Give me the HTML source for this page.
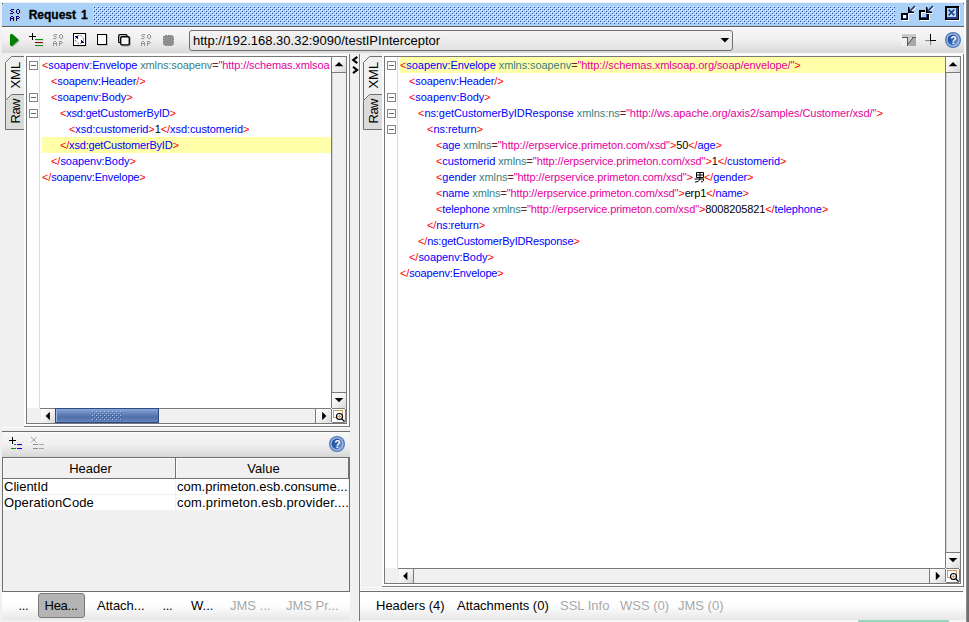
<!DOCTYPE html>
<html>
<head>
<meta charset="utf-8">
<title>Request 1</title>
<style>
*{box-sizing:border-box;margin:0;padding:0}
html,body{width:969px;height:622px;overflow:hidden;background:#f0f0f0;font-family:"Liberation Sans",sans-serif;}
body{position:relative}
.abs{position:absolute}
svg{position:absolute;overflow:visible}
/* title bar */
#title{left:2px;top:3px;width:962px;height:24px;background:#abd1f7;border-bottom:1px solid #5c5c5c;}
#title .txt{left:26.7px;top:4px;font-weight:bold;font-size:12px;word-spacing:1.6px;color:#000;-webkit-text-stroke:0.3px #000;white-space:nowrap;line-height:16px}
/* top toolbar */
#tb{left:2px;top:27px;width:962px;height:26px;background:linear-gradient(#ffffff 0,#f6f6f6 5%,#f0f0f0 50%,#d8d8d8 100%);}
#combo{left:189px;top:30px;width:544px;height:21px;border:1px solid #707070;border-radius:3px;background:linear-gradient(#f4f4f4,#ececec 50%,#e2e2e2);}
#combo .txt{left:3px;top:2px;font-size:13px;line-height:16px;white-space:nowrap;color:#000}
/* edges */
#redge{left:966px;top:0;width:3px;height:622px;background:linear-gradient(90deg,#9c9c9c 0,#707070 50%,#6c6c6c)}
#rwhite{left:964px;top:0;width:2px;height:622px;background:#fbfbfb}
#twhite{left:0;top:0;width:966px;height:2px;background:#fff}
/* editors */
.ed{background:#fff;border:1px solid #787878}
.code{font-size:11px;line-height:16px;color:#000;overflow:hidden}
.code div{height:16px;white-space:pre}
.code .nan{position:relative;display:inline-block;vertical-align:-2px}
.t{color:#f00}.e{color:#00f}.a{color:#3a8080}.q{color:#7a2020}.v{color:#e6009c}
.hl{background:#ffffaa}
.fold{width:9px;height:9px;border:1px solid #848484;background:#fff}
.fold:after{content:"";position:absolute;left:1px;top:3px;width:5px;height:1px;background:#6a6a6a}
.gut{background:#fff;border-right:1px solid #dcdcdc}
.sbv{background:#f0f0f0;border-left:1px solid #7c7c7c;}
.sbh{background:#f0f0f0;border-top:1px solid #7c7c7c;}
.btn{background:linear-gradient(135deg,#ffffff,#f2f2f2 50%,#d8d8d8);}
.ui{font-size:13px;line-height:16px;white-space:nowrap;color:#000}
.dis{color:#a9a9a9}
.vline{width:1px}.hline{height:1px}
</style>
</head>
<body>
<div id="twhite" class="abs"></div>
<div id="rwhite" class="abs"></div>
<div id="redge" class="abs"></div>
<div id="title" class="abs">
  <div class="abs txt">Request 1</div>
</div>
<div id="tb" class="abs"></div>
<div id="combo" class="abs"><div class="abs txt">http://192.168.30.32:9090/testIPInterceptor</div></div>
<!--ICONS-->
<svg class="abs" style="left:0;top:0" width="969" height="622" viewBox="0 0 969 622" shape-rendering="crispEdges">
<defs><pattern id="bump" x="93" y="6" width="4" height="4" patternUnits="userSpaceOnUse"><rect x="0" y="0" width="1" height="1" fill="#fff"/><rect x="1" y="1" width="1" height="1" fill="#2b4590"/><rect x="2" y="2" width="1" height="1" fill="#fff"/><rect x="3" y="3" width="1" height="1" fill="#2b4590"/></pattern>
<pattern id="bump2" x="92" y="411" width="4" height="4" patternUnits="userSpaceOnUse"><rect x="0" y="0" width="1" height="1" fill="#a9c4ea"/><rect x="1" y="1" width="1" height="1" fill="#3a5a9c"/><rect x="2" y="2" width="1" height="1" fill="#a9c4ea"/><rect x="3" y="3" width="1" height="1" fill="#3a5a9c"/></pattern></defs>
<rect x="93" y="6" width="802" height="18" fill="url(#bump)"/>
<rect x="12" y="10" width="3" height="1" fill="#c9c3b4"/><rect x="11" y="11" width="1" height="1" fill="#c9c3b4"/><rect x="12" y="12" width="2" height="1" fill="#c9c3b4"/><rect x="14" y="13" width="1" height="1" fill="#c9c3b4"/><rect x="11" y="14" width="3" height="1" fill="#c9c3b4"/><rect x="18" y="10" width="2" height="1" fill="#c9c3b4"/><rect x="17" y="11" width="1" height="1" fill="#c9c3b4"/><rect x="20" y="11" width="1" height="1" fill="#c9c3b4"/><rect x="17" y="12" width="1" height="1" fill="#c9c3b4"/><rect x="20" y="12" width="1" height="1" fill="#c9c3b4"/><rect x="17" y="13" width="1" height="1" fill="#c9c3b4"/><rect x="20" y="13" width="1" height="1" fill="#c9c3b4"/><rect x="18" y="14" width="2" height="1" fill="#c9c3b4"/><rect x="12" y="17" width="2" height="1" fill="#c9c3b4"/><rect x="11" y="18" width="1" height="1" fill="#c9c3b4"/><rect x="14" y="18" width="1" height="1" fill="#c9c3b4"/><rect x="11" y="19" width="4" height="1" fill="#c9c3b4"/><rect x="11" y="20" width="1" height="1" fill="#c9c3b4"/><rect x="14" y="20" width="1" height="1" fill="#c9c3b4"/><rect x="11" y="21" width="1" height="1" fill="#c9c3b4"/><rect x="14" y="21" width="1" height="1" fill="#c9c3b4"/><rect x="17" y="17" width="3" height="1" fill="#c9c3b4"/><rect x="17" y="18" width="1" height="1" fill="#c9c3b4"/><rect x="20" y="18" width="1" height="1" fill="#c9c3b4"/><rect x="17" y="19" width="3" height="1" fill="#c9c3b4"/><rect x="17" y="20" width="1" height="1" fill="#c9c3b4"/><rect x="17" y="21" width="1" height="1" fill="#c9c3b4"/><rect x="11" y="9" width="3" height="1" fill="#000088"/><rect x="10" y="10" width="1" height="1" fill="#000088"/><rect x="11" y="11" width="2" height="1" fill="#000088"/><rect x="13" y="12" width="1" height="1" fill="#000088"/><rect x="10" y="13" width="3" height="1" fill="#000088"/><rect x="17" y="9" width="2" height="1" fill="#000088"/><rect x="16" y="10" width="1" height="1" fill="#000088"/><rect x="19" y="10" width="1" height="1" fill="#000088"/><rect x="16" y="11" width="1" height="1" fill="#000088"/><rect x="19" y="11" width="1" height="1" fill="#000088"/><rect x="16" y="12" width="1" height="1" fill="#000088"/><rect x="19" y="12" width="1" height="1" fill="#000088"/><rect x="17" y="13" width="2" height="1" fill="#000088"/><rect x="11" y="16" width="2" height="1" fill="#000088"/><rect x="10" y="17" width="1" height="1" fill="#000088"/><rect x="13" y="17" width="1" height="1" fill="#000088"/><rect x="10" y="18" width="4" height="1" fill="#000088"/><rect x="10" y="19" width="1" height="1" fill="#000088"/><rect x="13" y="19" width="1" height="1" fill="#000088"/><rect x="10" y="20" width="1" height="1" fill="#000088"/><rect x="13" y="20" width="1" height="1" fill="#000088"/><rect x="16" y="16" width="3" height="1" fill="#000088"/><rect x="16" y="17" width="1" height="1" fill="#000088"/><rect x="19" y="17" width="1" height="1" fill="#000088"/><rect x="16" y="18" width="3" height="1" fill="#000088"/><rect x="16" y="19" width="1" height="1" fill="#000088"/><rect x="16" y="20" width="1" height="1" fill="#000088"/>
<rect x="55" y="35" width="3" height="1" fill="#e2e2e2"/><rect x="54" y="36" width="1" height="1" fill="#e2e2e2"/><rect x="55" y="37" width="2" height="1" fill="#e2e2e2"/><rect x="57" y="38" width="1" height="1" fill="#e2e2e2"/><rect x="54" y="39" width="3" height="1" fill="#e2e2e2"/><rect x="61" y="35" width="2" height="1" fill="#e2e2e2"/><rect x="60" y="36" width="1" height="1" fill="#e2e2e2"/><rect x="63" y="36" width="1" height="1" fill="#e2e2e2"/><rect x="60" y="37" width="1" height="1" fill="#e2e2e2"/><rect x="63" y="37" width="1" height="1" fill="#e2e2e2"/><rect x="60" y="38" width="1" height="1" fill="#e2e2e2"/><rect x="63" y="38" width="1" height="1" fill="#e2e2e2"/><rect x="61" y="39" width="2" height="1" fill="#e2e2e2"/><rect x="55" y="42" width="2" height="1" fill="#e2e2e2"/><rect x="54" y="43" width="1" height="1" fill="#e2e2e2"/><rect x="57" y="43" width="1" height="1" fill="#e2e2e2"/><rect x="54" y="44" width="4" height="1" fill="#e2e2e2"/><rect x="54" y="45" width="1" height="1" fill="#e2e2e2"/><rect x="57" y="45" width="1" height="1" fill="#e2e2e2"/><rect x="54" y="46" width="1" height="1" fill="#e2e2e2"/><rect x="57" y="46" width="1" height="1" fill="#e2e2e2"/><rect x="60" y="42" width="3" height="1" fill="#e2e2e2"/><rect x="60" y="43" width="1" height="1" fill="#e2e2e2"/><rect x="63" y="43" width="1" height="1" fill="#e2e2e2"/><rect x="60" y="44" width="3" height="1" fill="#e2e2e2"/><rect x="60" y="45" width="1" height="1" fill="#e2e2e2"/><rect x="60" y="46" width="1" height="1" fill="#e2e2e2"/><rect x="54" y="34" width="3" height="1" fill="#9a9a9a"/><rect x="53" y="35" width="1" height="1" fill="#9a9a9a"/><rect x="54" y="36" width="2" height="1" fill="#9a9a9a"/><rect x="56" y="37" width="1" height="1" fill="#9a9a9a"/><rect x="53" y="38" width="3" height="1" fill="#9a9a9a"/><rect x="60" y="34" width="2" height="1" fill="#9a9a9a"/><rect x="59" y="35" width="1" height="1" fill="#9a9a9a"/><rect x="62" y="35" width="1" height="1" fill="#9a9a9a"/><rect x="59" y="36" width="1" height="1" fill="#9a9a9a"/><rect x="62" y="36" width="1" height="1" fill="#9a9a9a"/><rect x="59" y="37" width="1" height="1" fill="#9a9a9a"/><rect x="62" y="37" width="1" height="1" fill="#9a9a9a"/><rect x="60" y="38" width="2" height="1" fill="#9a9a9a"/><rect x="54" y="41" width="2" height="1" fill="#9a9a9a"/><rect x="53" y="42" width="1" height="1" fill="#9a9a9a"/><rect x="56" y="42" width="1" height="1" fill="#9a9a9a"/><rect x="53" y="43" width="4" height="1" fill="#9a9a9a"/><rect x="53" y="44" width="1" height="1" fill="#9a9a9a"/><rect x="56" y="44" width="1" height="1" fill="#9a9a9a"/><rect x="53" y="45" width="1" height="1" fill="#9a9a9a"/><rect x="56" y="45" width="1" height="1" fill="#9a9a9a"/><rect x="59" y="41" width="3" height="1" fill="#9a9a9a"/><rect x="59" y="42" width="1" height="1" fill="#9a9a9a"/><rect x="62" y="42" width="1" height="1" fill="#9a9a9a"/><rect x="59" y="43" width="3" height="1" fill="#9a9a9a"/><rect x="59" y="44" width="1" height="1" fill="#9a9a9a"/><rect x="59" y="45" width="1" height="1" fill="#9a9a9a"/>
<rect x="143" y="35" width="3" height="1" fill="#e2e2e2"/><rect x="142" y="36" width="1" height="1" fill="#e2e2e2"/><rect x="143" y="37" width="2" height="1" fill="#e2e2e2"/><rect x="145" y="38" width="1" height="1" fill="#e2e2e2"/><rect x="142" y="39" width="3" height="1" fill="#e2e2e2"/><rect x="149" y="35" width="2" height="1" fill="#e2e2e2"/><rect x="148" y="36" width="1" height="1" fill="#e2e2e2"/><rect x="151" y="36" width="1" height="1" fill="#e2e2e2"/><rect x="148" y="37" width="1" height="1" fill="#e2e2e2"/><rect x="151" y="37" width="1" height="1" fill="#e2e2e2"/><rect x="148" y="38" width="1" height="1" fill="#e2e2e2"/><rect x="151" y="38" width="1" height="1" fill="#e2e2e2"/><rect x="149" y="39" width="2" height="1" fill="#e2e2e2"/><rect x="143" y="42" width="2" height="1" fill="#e2e2e2"/><rect x="142" y="43" width="1" height="1" fill="#e2e2e2"/><rect x="145" y="43" width="1" height="1" fill="#e2e2e2"/><rect x="142" y="44" width="4" height="1" fill="#e2e2e2"/><rect x="142" y="45" width="1" height="1" fill="#e2e2e2"/><rect x="145" y="45" width="1" height="1" fill="#e2e2e2"/><rect x="142" y="46" width="1" height="1" fill="#e2e2e2"/><rect x="145" y="46" width="1" height="1" fill="#e2e2e2"/><rect x="148" y="42" width="3" height="1" fill="#e2e2e2"/><rect x="148" y="43" width="1" height="1" fill="#e2e2e2"/><rect x="151" y="43" width="1" height="1" fill="#e2e2e2"/><rect x="148" y="44" width="3" height="1" fill="#e2e2e2"/><rect x="148" y="45" width="1" height="1" fill="#e2e2e2"/><rect x="148" y="46" width="1" height="1" fill="#e2e2e2"/><rect x="142" y="34" width="3" height="1" fill="#9a9a9a"/><rect x="141" y="35" width="1" height="1" fill="#9a9a9a"/><rect x="142" y="36" width="2" height="1" fill="#9a9a9a"/><rect x="144" y="37" width="1" height="1" fill="#9a9a9a"/><rect x="141" y="38" width="3" height="1" fill="#9a9a9a"/><rect x="148" y="34" width="2" height="1" fill="#9a9a9a"/><rect x="147" y="35" width="1" height="1" fill="#9a9a9a"/><rect x="150" y="35" width="1" height="1" fill="#9a9a9a"/><rect x="147" y="36" width="1" height="1" fill="#9a9a9a"/><rect x="150" y="36" width="1" height="1" fill="#9a9a9a"/><rect x="147" y="37" width="1" height="1" fill="#9a9a9a"/><rect x="150" y="37" width="1" height="1" fill="#9a9a9a"/><rect x="148" y="38" width="2" height="1" fill="#9a9a9a"/><rect x="142" y="41" width="2" height="1" fill="#9a9a9a"/><rect x="141" y="42" width="1" height="1" fill="#9a9a9a"/><rect x="144" y="42" width="1" height="1" fill="#9a9a9a"/><rect x="141" y="43" width="4" height="1" fill="#9a9a9a"/><rect x="141" y="44" width="1" height="1" fill="#9a9a9a"/><rect x="144" y="44" width="1" height="1" fill="#9a9a9a"/><rect x="141" y="45" width="1" height="1" fill="#9a9a9a"/><rect x="144" y="45" width="1" height="1" fill="#9a9a9a"/><rect x="147" y="41" width="3" height="1" fill="#9a9a9a"/><rect x="147" y="42" width="1" height="1" fill="#9a9a9a"/><rect x="150" y="42" width="1" height="1" fill="#9a9a9a"/><rect x="147" y="43" width="3" height="1" fill="#9a9a9a"/><rect x="147" y="44" width="1" height="1" fill="#9a9a9a"/><rect x="147" y="45" width="1" height="1" fill="#9a9a9a"/>
<rect x="2" y="3" width="1" height="1" fill="#555"/><rect x="963" y="3" width="1" height="1" fill="#555"/>
</svg>
<svg class="abs" style="left:0;top:0" width="969" height="622" viewBox="0 0 969 622">
<g shape-rendering="crispEdges"><rect x="902" y="14" width="7" height="7" fill="#fff"/><rect x="901" y="13" width="7" height="7" fill="#000"/><rect x="903" y="15" width="4" height="4" fill="#27428e"/><rect x="903" y="15" width="3" height="3" fill="#fff"/><rect x="920" y="12" width="5" height="1" fill="#fff"/><rect x="921" y="12" width="1" height="6" fill="#fff"/><rect x="920" y="20" width="10" height="1" fill="#fff"/><rect x="929" y="15" width="1" height="6" fill="#fff"/><rect x="919" y="10" width="6" height="2" fill="#000"/><rect x="919" y="10" width="2" height="10" fill="#000"/><rect x="919" y="18" width="10" height="2" fill="#000"/><rect x="927" y="14" width="2" height="6" fill="#000"/><rect x="921" y="17" width="6" height="1" fill="#27428e"/><rect x="926" y="14" width="1" height="4" fill="#27428e"/><rect x="921" y="12" width="1" height="5" fill="#fff"/><rect x="946" y="7" width="14" height="14" fill="#fff"/><rect x="945" y="6" width="14" height="14" fill="#000"/><rect x="947" y="8" width="11" height="11" fill="#27428e"/><rect x="947" y="8" width="9" height="9" fill="#abd1f7"/></g>
<path d="M949.6 10.6 L955.4 16.4 M955.4 10.6 L949.6 16.4" stroke="#fff" stroke-width="1.2" fill="none" opacity=".8"/>
<path d="M948.7 9.7 L954.3 15.3 M954.3 9.7 L948.7 15.3" stroke="#27428e" stroke-width="1.7" fill="none"/>
<path d="M909 8 V14 H915 Z" fill="#fff"/><path d="M911.8 10.8 L916 6.6" stroke="#fff" stroke-width="1.6"/><path d="M908 7 V13 H914 Z" fill="#27428e"/><rect x="908" y="7" width="1.4" height="6" fill="#000"/><rect x="908" y="11.6" width="6" height="1.4" fill="#000"/><path d="M911 10 L915 6" stroke="#1a2f6e" stroke-width="1.7"/>
<path d="M927 8 V14 H933 Z" fill="#fff"/><path d="M929.8 10.8 L934 6.6" stroke="#fff" stroke-width="1.6"/><path d="M926 7 V13 H932 Z" fill="#27428e"/><rect x="926" y="7" width="1.4" height="6" fill="#000"/><rect x="926" y="11.6" width="6" height="1.4" fill="#000"/><path d="M929 10 L933 6" stroke="#1a2f6e" stroke-width="1.7"/>
<path d="M11.5 34.5 L11 34 L10 35 V45 L11 46.3 L12.3 46.3 L18.6 40.6 V39.6 L12.5 34 Z" fill="#b8b8b8" transform="translate(0.8,0.8)"/>
<path d="M11 34 L10 35 V45 L11 46 H12.3 L18.5 40.5 V39.5 L12.3 34 Z" fill="#008000"/>
<g shape-rendering="crispEdges"><rect x="29" y="36" width="7" height="1" fill="#000"/><rect x="32" y="33" width="1" height="7" fill="#000"/><rect x="35" y="39" width="8" height="1" fill="#109010"/><rect x="35" y="42" width="8" height="1" fill="#8a0000"/><rect x="35" y="45" width="8" height="1" fill="#109010"/><rect x="36" y="40" width="8" height="1" fill="#d8d8d8"/><rect x="36" y="43" width="8" height="1" fill="#d8d8d8"/><rect x="36" y="46" width="8" height="1" fill="#d8d8d8"/></g>
<g shape-rendering="crispEdges"><rect x="74" y="34" width="13" height="13" fill="#d0d0d0"/><rect x="73" y="33" width="13" height="13" fill="#000"/><rect x="74" y="34" width="11" height="11" fill="#fff"/></g>
<circle cx="79.5" cy="39.5" r="4.1" fill="none" stroke="#808080" stroke-width="1" stroke-dasharray="2.2 1.1"/>
<g shape-rendering="crispEdges" fill="#000090"><rect x="75" y="36" width="3" height="1"/><rect x="77" y="36" width="1" height="3"/><rect x="76" y="37" width="1" height="1"/><rect x="81" y="40" width="1" height="3"/><rect x="81" y="42" width="3" height="1"/><rect x="82" y="41" width="1" height="1"/></g>
<g shape-rendering="crispEdges"><rect x="98" y="35" width="10" height="11" fill="#c4c4c4"/><rect x="97.5" y="34.5" width="9" height="10" fill="#fafafa" stroke="#000" stroke-width="1"/><rect x="98" y="44" width="9" height="1" fill="#000"/><rect x="106" y="35" width="1" height="10" fill="#000"/></g>
<rect x="118.7" y="34.7" width="8.4" height="8" rx="1.3" fill="#f4f4f4" stroke="#000" stroke-width="1.3"/>
<rect x="121.2" y="37.2" width="9" height="8.6" rx="1.3" fill="#bbb" stroke="#aaa" stroke-width="1.3"/>
<rect x="120.7" y="36.7" width="8.6" height="8.2" rx="1.3" fill="#f6f6f6" stroke="#000" stroke-width="1.4"/>
<rect x="163.5" y="35.5" width="10" height="10" rx="2" fill="#8e8e8e" stroke="#7a7a7a" stroke-width="1" stroke-dasharray="1.5 1"/>
<path d="M720.6 38 h8.6 l-4.3 4.6z" fill="#000"/>
<g shape-rendering="crispEdges"><rect x="902" y="33" width="14" height="13" fill="#fafafa"/><rect x="902" y="34" width="14" height="4" fill="#cacaca"/><rect x="902" y="38" width="5" height="8" fill="#f2f2f2"/></g>
<path d="M908 38 H913.5 L908 44.5Z" fill="#cacaca"/><path d="M913.5 38 H916 V46 H908 V44.5Z" fill="#a9a9a9"/>
<g shape-rendering="crispEdges"><rect x="902" y="37" width="6" height="1" fill="#5a5a5a"/><rect x="912" y="37" width="4" height="1" fill="#5a5a5a"/><rect x="907" y="37" width="1" height="9" fill="#5a5a5a"/></g>
<path d="M908 44.2 L913.2 37.6" stroke="#4a4a4a" stroke-width="1" fill="none"/>
<g shape-rendering="crispEdges"><rect x="925" y="40" width="5" height="1" fill="#8c8c8c"/><rect x="930" y="40" width="6" height="1" fill="#000"/><rect x="930" y="34" width="1" height="7" fill="#000"/><rect x="930" y="41" width="1" height="4" fill="#8c8c8c"/><rect x="926" y="41" width="4" height="1" fill="#dcdcdc"/><rect x="931" y="41" width="1" height="4" fill="#dcdcdc"/></g>
<defs><linearGradient id="hg953" x1="0" y1="0.2" x2="1" y2="0.8"><stop offset="0" stop-color="#1a4790"/><stop offset="0.55" stop-color="#3865ae"/><stop offset="1" stop-color="#86a8dc"/></linearGradient></defs><circle cx="953" cy="40" r="8" fill="#4d78bc"/><circle cx="953" cy="40" r="6.7" fill="#a4bde4"/><circle cx="953" cy="40" r="5.4" fill="url(#hg953)"/><text x="953.4" y="43.7" font-family="Liberation Sans,sans-serif" font-weight="bold" font-size="10.5" fill="#fff" text-anchor="middle">?</text>
</svg>
<!--/ICONS-->

<!-- pane content borders (white ring) -->
<div class="abs" style="left:24px;top:54px;width:325px;height:372px;background:#fcfcfc"></div>
<div class="abs" style="left:382px;top:53px;width:581px;height:533px;background:#fcfcfc"></div>
<!-- LEFT EDITOR -->
<div id="led" class="abs ed" style="left:26px;top:56px;width:321px;height:368px"></div>
<div id="lcode" class="abs code" style="left:42px;top:57px;width:289px;height:351px">
<!--LC-->
<div style="padding-left:0px;letter-spacing:-0.104px;width:288px;overflow:hidden;"><span class="t">&lt;</span><span class="e">soapenv:Envelope</span> <span class="a">xmlns:soapenv</span><span class="q">=</span><span class="v">"http://schemas.xmlsoap.org/soap/envelope/"</span><span class="t">&gt;</span></div>
<div style="padding-left:9px;letter-spacing:-0.121px;"><span class="t">&lt;</span><span class="e">soapenv:Header</span><span class="t">/&gt;</span></div>
<div style="padding-left:9px;letter-spacing:-0.071px;"><span class="t">&lt;</span><span class="e">soapenv:Body</span><span class="t">&gt;</span></div>
<div style="padding-left:18px;letter-spacing:-0.193px;"><span class="t">&lt;</span><span class="e">xsd:getCustomerByID</span><span class="t">&gt;</span></div>
<div style="padding-left:27px;letter-spacing:-0.073px;"><span class="t">&lt;</span><span class="e">xsd:customerid</span><span class="t">&gt;</span>1<span class="t">&lt;/</span><span class="e">xsd:customerid</span><span class="t">&gt;</span></div>
<div class="hl" style="padding-left:18px;letter-spacing:-0.191px;"><span class="t">&lt;/</span><span class="e">xsd:getCustomerByID</span><span class="t">&gt;</span></div>
<div style="padding-left:9px;letter-spacing:-0.056px;"><span class="t">&lt;/</span><span class="e">soapenv:Body</span><span class="t">&gt;</span></div>
<div style="padding-left:0px;letter-spacing:-0.149px;"><span class="t">&lt;/</span><span class="e">soapenv:Envelope</span><span class="t">&gt;</span></div>
<!--/LC-->
</div>

<!-- RIGHT EDITOR -->
<div id="red" class="abs ed" style="left:384px;top:56px;width:577px;height:528px"></div>
<div id="rcode" class="abs code" style="left:400px;top:57px;width:545px;height:511px">
<!--RC-->
<div class="hl" style="padding-left:0px;letter-spacing:-0.073px;"><span class="t">&lt;</span><span class="e">soapenv:Envelope</span> <span class="a">xmlns:soapenv</span><span class="q">=</span><span class="v">"http://schemas.xmlsoap.org/soap/envelope/"</span><span class="t">&gt;</span></div>
<div style="padding-left:9px;letter-spacing:-0.121px;"><span class="t">&lt;</span><span class="e">soapenv:Header</span><span class="t">/&gt;</span></div>
<div style="padding-left:9px;letter-spacing:-0.071px;"><span class="t">&lt;</span><span class="e">soapenv:Body</span><span class="t">&gt;</span></div>
<div style="padding-left:18px;letter-spacing:-0.064px;"><span class="t">&lt;</span><span class="e">ns:getCustomerByIDResponse</span> <span class="a">xmlns:ns</span><span class="q">=</span><span class="v">"http://ws.apache.org/axis2/samples/Customer/xsd/"</span><span class="t">&gt;</span></div>
<div style="padding-left:27px;letter-spacing:-0.036px;"><span class="t">&lt;</span><span class="e">ns:return</span><span class="t">&gt;</span></div>
<div style="padding-left:36px;letter-spacing:-0.108px;"><span class="t">&lt;</span><span class="e">age</span> <span class="a">xmlns</span><span class="q">=</span><span class="v">"http://erpservice.primeton.com/xsd"</span><span class="t">&gt;</span>50<span class="t">&lt;/</span><span class="e">age</span><span class="t">&gt;</span></div>
<div style="padding-left:36px;letter-spacing:-0.092px;"><span class="t">&lt;</span><span class="e">customerid</span> <span class="a">xmlns</span><span class="q">=</span><span class="v">"http://erpservice.primeton.com/xsd"</span><span class="t">&gt;</span>1<span class="t">&lt;/</span><span class="e">customerid</span><span class="t">&gt;</span></div>
<div style="padding-left:36px;letter-spacing:-0.085px;"><span class="t">&lt;</span><span class="e">gender</span> <span class="a">xmlns</span><span class="q">=</span><span class="v">"http://erpservice.primeton.com/xsd"</span><span class="t">&gt;</span><svg class="nan" width="11" height="11" viewBox="0 0 11 11"><path d="M3.5 0.5H10.5V5.5H3.5ZM3.5 3H10.5M7 0.5V5.5M1.5 7H11M7 5.5V7C6.7 8.6 5.2 9.7 2 10.1M10.5 7C10.5 9 10.3 9.9 8 9.9" fill="none" stroke="#000" stroke-width="1"/></svg><span class="t">&lt;/</span><span class="e">gender</span><span class="t">&gt;</span></div>
<div style="padding-left:36px;letter-spacing:-0.121px;"><span class="t">&lt;</span><span class="e">name</span> <span class="a">xmlns</span><span class="q">=</span><span class="v">"http://erpservice.primeton.com/xsd"</span><span class="t">&gt;</span>erp1<span class="t">&lt;/</span><span class="e">name</span><span class="t">&gt;</span></div>
<div style="padding-left:36px;letter-spacing:-0.113px;"><span class="t">&lt;</span><span class="e">telephone</span> <span class="a">xmlns</span><span class="q">=</span><span class="v">"http://erpservice.primeton.com/xsd"</span><span class="t">&gt;</span>8008205821<span class="t">&lt;/</span><span class="e">telephone</span><span class="t">&gt;</span></div>
<div style="padding-left:27px;letter-spacing:-0.112px;"><span class="t">&lt;/</span><span class="e">ns:return</span><span class="t">&gt;</span></div>
<div style="padding-left:18px;letter-spacing:-0.184px;"><span class="t">&lt;/</span><span class="e">ns:getCustomerByIDResponse</span><span class="t">&gt;</span></div>
<div style="padding-left:9px;letter-spacing:-0.056px;"><span class="t">&lt;/</span><span class="e">soapenv:Body</span><span class="t">&gt;</span></div>
<div style="padding-left:0px;letter-spacing:-0.149px;"><span class="t">&lt;/</span><span class="e">soapenv:Envelope</span><span class="t">&gt;</span></div>
<!--/RC-->
</div>

<!-- fold markers & gutters -->
<div class="abs gut" style="left:27px;top:57px;width:13px;height:351px"></div>
<div class="abs" style="left:27px;top:408px;width:13px;height:15px;background:#f0f0f0"></div>
<div class="abs" style="left:331px;top:57px;width:15px;height:351px;background:#f0f0f0;border-left:1px solid #7a7a7a;box-shadow:inset 1px 0 0 #d2d2d2"></div>
<div class="abs btn" style="left:332px;top:57px;width:14px;height:16px;border-bottom:1px solid #7a7a7a"></div>
<div class="abs btn" style="left:332px;top:392px;width:14px;height:16px;border-top:1px solid #7a7a7a"></div>
<div class="abs" style="left:40px;top:408px;width:291px;height:15px;background:#f0f0f0;border-top:1px solid #7a7a7a"></div>
<div class="abs btn" style="left:41px;top:409px;width:15px;height:14px;border-right:1px solid #7a7a7a"></div>
<div class="abs btn" style="left:315px;top:409px;width:16px;height:14px;border-left:1px solid #7a7a7a"></div>
<div class="abs" style="left:55px;top:408px;width:104px;height:15px;border:1px solid #2c4a88;background:linear-gradient(#8ba5d3,#6180b9 40%,#5070aa 62%,#6484be);box-shadow:inset 1px 0 0 #9fb8e2"></div>
<div class="abs" style="left:331px;top:408px;width:15px;height:15px;background:#7c7c7c"></div>
<div class="abs" style="left:332px;top:409px;width:13px;height:13px;background:linear-gradient(135deg,#fff 55%,#ececec)"></div>
<div class="abs" style="left:331px;top:408px;width:1px;height:1px;background:#fff"></div>
<div class="abs" style="left:345px;top:408px;width:1px;height:1px;background:#fff"></div>
<div class="abs" style="left:331px;top:422px;width:1px;height:1px;background:#fff"></div>
<div class="abs" style="left:345px;top:422px;width:1px;height:1px;background:#fff"></div>
<div class="abs fold" style="left:29px;top:61px"></div>
<div class="abs fold" style="left:29px;top:93px"></div>
<div class="abs fold" style="left:29px;top:109px"></div>
<div class="abs gut" style="left:385px;top:57px;width:13px;height:511px"></div>
<div class="abs" style="left:385px;top:568px;width:13px;height:15px;background:#f0f0f0"></div>
<div class="abs" style="left:945px;top:57px;width:15px;height:511px;background:#f0f0f0;border-left:1px solid #7a7a7a;box-shadow:inset 1px 0 0 #d2d2d2"></div>
<div class="abs btn" style="left:946px;top:57px;width:14px;height:16px;border-bottom:1px solid #7a7a7a"></div>
<div class="abs btn" style="left:946px;top:552px;width:14px;height:16px;border-top:1px solid #7a7a7a"></div>
<div class="abs" style="left:398px;top:568px;width:547px;height:15px;background:#f0f0f0;border-top:1px solid #7a7a7a"></div>
<div class="abs btn" style="left:399px;top:569px;width:15px;height:14px;border-right:1px solid #7a7a7a"></div>
<div class="abs btn" style="left:929px;top:569px;width:16px;height:14px;border-left:1px solid #7a7a7a"></div>
<div class="abs" style="left:945px;top:568px;width:15px;height:15px;background:#7c7c7c"></div>
<div class="abs" style="left:946px;top:569px;width:13px;height:13px;background:linear-gradient(135deg,#fff 55%,#ececec)"></div>
<div class="abs" style="left:945px;top:568px;width:1px;height:1px;background:#fff"></div>
<div class="abs" style="left:959px;top:568px;width:1px;height:1px;background:#fff"></div>
<div class="abs" style="left:945px;top:582px;width:1px;height:1px;background:#fff"></div>
<div class="abs" style="left:959px;top:582px;width:1px;height:1px;background:#fff"></div>
<div class="abs fold" style="left:387px;top:61px"></div>
<div class="abs fold" style="left:387px;top:93px"></div>
<div class="abs fold" style="left:387px;top:109px"></div>
<div class="abs fold" style="left:387px;top:125px"></div>

<!-- divider lines -->
<div class="abs vline" style="left:349px;top:54px;height:373px;background:#7a7a7a"></div>
<div class="abs vline" style="left:359px;top:54px;height:567px;background:#7a7a7a"></div>
<div class="abs vline" style="left:360px;top:54px;height:537px;background:#fafafa"></div>
<div class="abs vline" style="left:963px;top:54px;height:533px;background:#7a7a7a"></div>
<div class="abs hline" style="left:382px;top:586px;width:582px;background:#7a7a7a"></div>
<div class="abs hline" style="left:360px;top:587px;width:604px;background:#fcfcfc"></div>
<div class="abs hline" style="left:360px;top:590px;width:604px;background:#fcfcfc"></div>

<!-- left split lines -->
<div class="abs hline" style="left:24px;top:426px;width:326px;background:#7a7a7a"></div>
<div class="abs hline" style="left:2px;top:427px;width:349px;background:#fcfcfc"></div>
<div class="abs hline" style="left:2px;top:431px;width:348px;background:#6e6e6e"></div>
<!-- bottom-left toolbar -->
<div class="abs" style="left:2px;top:432px;width:348px;height:25px;background:linear-gradient(#ffffff 0,#f6f6f6 5%,#f0f0f0 50%,#d8d8d8 100%)"></div>
<!-- table -->
<div class="abs" style="left:2px;top:457px;width:348px;height:135px;border:1px solid #6e6e6e;background:#f0f0f0"></div>
<div class="abs" style="left:3px;top:458px;width:173px;height:21px;border-right:1px solid #747474;border-bottom:1px solid #747474;background:#f0f0f0;box-shadow:inset 1px 1px #fbfbfb"></div>
<div class="abs" style="left:176px;top:458px;width:173px;height:21px;border-right:1px solid #747474;border-bottom:1px solid #747474;background:#f0f0f0;box-shadow:inset 1px 1px #fbfbfb"></div>
<div class="abs" style="left:3px;top:479px;width:345px;height:32px;background:#fff"></div>
<div class="abs hline" style="left:3px;top:494px;width:345px;background:#f0f0f0"></div>
<div class="abs hline" style="left:3px;top:510px;width:345px;background:#f0f0f0"></div>
<div class="abs vline" style="left:175px;top:479px;height:32px;background:#f0f0f0"></div>
<div class="abs ui" id="th1" style="left:4px;top:461px;width:173px;text-align:center">Header</div>
<div class="abs ui" id="th2" style="left:177px;top:461px;width:173px;text-align:center">Value</div>
<div class="abs ui" id="c11" style="left:4px;top:479px">ClientId</div>
<div class="abs ui" id="c21" style="left:4px;top:495px;letter-spacing:0.14px">OperationCode</div>
<div class="abs ui" id="c12" style="left:177px;top:479px">com.primeton.esb.consume...</div>
<div class="abs ui" id="c22" style="left:177px;top:495px;letter-spacing:0.15px">com.primeton.esb.provider....</div>
<!-- bottom-left tabs -->
<div class="abs" style="left:2px;top:592px;width:348px;height:28px;background:linear-gradient(#ffffff,#fefefe 48%,#e7e7e7 100%)"></div>
<div class="abs" style="left:38px;top:593px;width:47px;height:25px;border:1px solid #7a7a7a;border-radius:3px;background:#b4b4b4"></div>
<div class="abs ui" id="bt0" style="left:18.5px;top:598px;letter-spacing:-0.4px">...</div>
<div class="abs ui" id="bt1" style="left:44.5px;top:598px;letter-spacing:-0.25px">Hea...</div>
<div class="abs ui" id="bt2" style="left:97px;top:598px">Attach...</div>
<div class="abs ui" id="bt3" style="left:162.5px;top:598px;letter-spacing:-0.4px">...</div>
<div class="abs ui" id="bt4" style="left:191px;top:598px">W...</div>
<div class="abs ui dis" id="bt5" style="left:230px;top:598px">JMS ...</div>
<div class="abs ui dis" id="bt6" style="left:286px;top:598px">JMS Pr...</div>
<!-- bottom-right tabs -->
<div class="abs hline" style="left:360px;top:591px;width:603px;background:#6e6e6e"></div>
<div class="abs" style="left:360px;top:620px;width:606px;height:2px;background:#f7f7f7"></div>
<div class="abs" style="left:360px;top:592px;width:606px;height:28px;background:linear-gradient(#ffffff,#fefefe 48%,#e7e7e7 100%)"></div>
<div class="abs ui" id="rt0" style="left:376px;top:598px">Headers (4)</div>
<div class="abs ui" id="rt1" style="left:457px;top:598px">Attachments (0)</div>
<div class="abs ui dis" id="rt2" style="left:560px;top:598px">SSL Info</div>
<div class="abs ui dis" id="rt3" style="left:620px;top:598px">WSS (0)</div>
<div class="abs ui dis" id="rt4" style="left:678px;top:598px">JMS (0)</div>
<div class="abs" style="left:858px;top:620px;width:91px;height:2px;background:#96d8bc"></div>
<!--ICONS2-->
<svg class="abs" style="left:0;top:0" width="969" height="622" viewBox="0 0 969 622">
<defs><linearGradient id="hg337" x1="0" y1="0.2" x2="1" y2="0.8"><stop offset="0" stop-color="#1a4790"/><stop offset="0.55" stop-color="#3865ae"/><stop offset="1" stop-color="#86a8dc"/></linearGradient></defs><circle cx="337" cy="444" r="8" fill="#4d78bc"/><circle cx="337" cy="444" r="6.7" fill="#a4bde4"/><circle cx="337" cy="444" r="5.4" fill="url(#hg337)"/><text x="337.4" y="447.7" font-family="Liberation Sans,sans-serif" font-weight="bold" font-size="10.5" fill="#fff" text-anchor="middle">?</text>
<path d="M6 129.5 V100.5 L11.5 94.5 H24 V129.5 Z" fill="#dbdbdb"/><path d="M24 129.5 H5.5 V100.5 L11.5 94.5 H24" fill="none" stroke="#707070" stroke-width="1"/><path d="M5.5 100 V62.5 L11.5 56.5 H24" fill="none" stroke="#707070" stroke-width="1"/><text transform="translate(19.5,88.6) rotate(-90)" font-family="Liberation Sans,sans-serif" font-size="13" fill="#000">XML</text><text transform="translate(19.5,123.4) rotate(-90)" font-family="Liberation Sans,sans-serif" font-size="13" letter-spacing="-0.6" fill="#000">Raw</text>
<path d="M364 129.5 V100.5 L369.5 94.5 H382 V129.5 Z" fill="#dbdbdb"/><path d="M382 129.5 H363.5 V100.5 L369.5 94.5 H382" fill="none" stroke="#707070" stroke-width="1"/><path d="M363.5 100 V62.5 L369.5 56.5 H382" fill="none" stroke="#707070" stroke-width="1"/><text transform="translate(377.5,88.6) rotate(-90)" font-family="Liberation Sans,sans-serif" font-size="13" fill="#000">XML</text><text transform="translate(377.5,123.4) rotate(-90)" font-family="Liberation Sans,sans-serif" font-size="13" letter-spacing="-0.6" fill="#000">Raw</text>
<path d="M357.3 56.8 L353.2 60 L357.3 63.2" fill="none" stroke="#000" stroke-width="2.1"/>
<path d="M353 66.8 L357.1 70 L353 73.2" fill="none" stroke="#000" stroke-width="2.1"/>
<path d="M334.7 66.2 L339 61.9 L343.3 66.2z" fill="#000"/><path d="M334.7 398.0 L339 402.3 L343.3 398.0z" fill="#000"/><path d="M49.900000000000006 411.7 L45.6 416 L49.900000000000006 420.3z" fill="#000"/><path d="M322.1 411.7 L326.40000000000003 416 L322.1 420.3z" fill="#000"/>
<path d="M948.7 66.2 L953 61.9 L957.3 66.2z" fill="#000"/><path d="M948.7 558.0 L953 562.3000000000001 L957.3 558.0z" fill="#000"/><path d="M407.4 571.7 L403.09999999999997 576 L407.4 580.3z" fill="#000"/><path d="M935.8 571.7 L940.1 576 L935.8 580.3z" fill="#000"/>
<rect x="333.5" y="410.5" width="9" height="7" fill="none" stroke="#d39a5a" stroke-width="1"/><circle cx="339.5" cy="416.5" r="3" fill="#fff" stroke="#000" stroke-width="1.15"/><path d="M337.5 416.5h4M339.5 414.5v4" stroke="#d39a5a" stroke-width="1" fill="none"/><path d="M341.8 418.8L344.5 421.5" stroke="#000" stroke-width="1.2"/>
<rect x="947.5" y="570.5" width="9" height="7" fill="none" stroke="#d39a5a" stroke-width="1"/><circle cx="953.5" cy="576.5" r="3" fill="#fff" stroke="#000" stroke-width="1.15"/><path d="M951.5 576.5h4M953.5 574.5v4" stroke="#d39a5a" stroke-width="1" fill="none"/><path d="M955.8 578.8L958.5 581.5" stroke="#000" stroke-width="1.2"/>
<g shape-rendering="crispEdges"><rect x="9" y="440" width="7" height="1" fill="#000"/><rect x="12" y="437" width="1" height="7" fill="#000"/><rect x="14" y="444" width="2" height="1" fill="#109010"/><rect x="17" y="444" width="5" height="1" fill="#0000f0"/><rect x="11" y="448" width="5" height="1" fill="#109010"/><rect x="17" y="448" width="5" height="1" fill="#0000f0"/><rect x="18" y="445" width="5" height="1" fill="#e0e0d0"/><rect x="18" y="449" width="5" height="1" fill="#e0e0d0"/></g>
<path d="M31 437l5.5 5.5M36.5 437l-5.5 5.5" stroke="#8a8a8a" stroke-width="0.8" fill="none"/>
<g shape-rendering="crispEdges"><rect x="33" y="444" width="5" height="1" fill="#8e8e8e"/><rect x="39" y="444" width="5" height="1" fill="#a6a6a6"/><rect x="33" y="448" width="5" height="1" fill="#8e8e8e"/><rect x="39" y="448" width="5" height="1" fill="#a6a6a6"/></g>
<rect x="92" y="411" width="30" height="10" fill="url(#bump2)" shape-rendering="crispEdges"/>
</svg>
<!--/ICONS2-->

</body>
</html>
